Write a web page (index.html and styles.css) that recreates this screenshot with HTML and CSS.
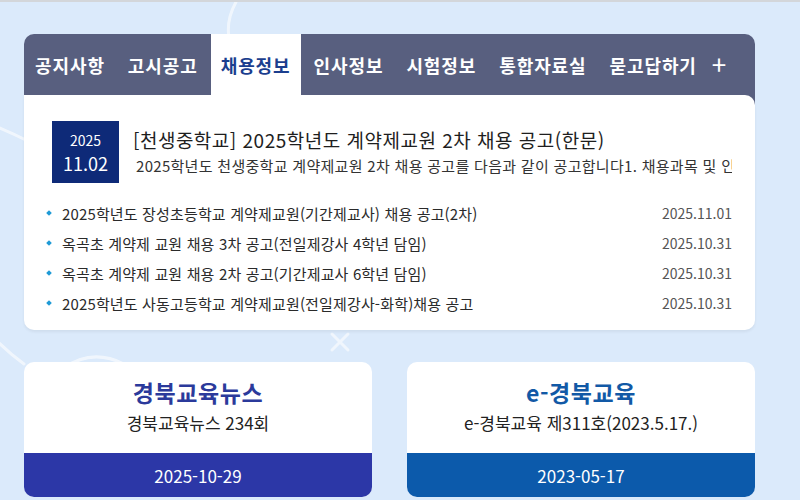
FILE: index.html
```html
<!DOCTYPE html>
<html lang="ko">
<head>
  <meta charset="UTF-8" />
  <title>채용정보</title>
  <link rel="stylesheet" href="styles.css">
</head>
<body>
  <svg class="deco" width="800" height="500" viewBox="0 0 800 500" aria-hidden="true">
    <path d="M236 0 Q226 18 229 36" />
    <path d="M-10 122 Q10 130 30 140" />
    <path d="M-4 338 Q10 352 24 362" />
    <path d="M64 366 Q92 346 124 362" />
    <path d="M332 332 L348 348 M348 332 L332 348" />
  </svg>

  <main class="wrap">
    <section class="board">
      <nav class="tabs">
        <a class="tab">공지사항</a>
        <a class="tab">고시공고</a>
        <a class="tab active">채용정보</a>
        <a class="tab">인사정보</a>
        <a class="tab">시험정보</a>
        <a class="tab">통합자료실</a>
        <a class="tab">묻고답하기</a>
        <a class="more">+</a>
      </nav>

      <div class="panel">
        <div class="feature">
          <div class="datebox">
            <span class="year">2025</span>
            <span class="day">11.02</span>
          </div>
          <div class="feature-text">
            <div class="headline">[천생중학교] 2025학년도 계약제교원 2차 채용 공고(한문)</div>
            <div class="summary">2025학년도 천생중학교 계약제교원 2차 채용 공고를 다음과 같이 공고합니다1. 채용과목 및 인원 : 한문 1명</div>
          </div>
        </div>

        <ul class="posts">
          <li><span class="title">2025학년도 장성초등학교 계약제교원(기간제교사) 채용 공고(2차)</span><span class="date">2025.11.01</span></li>
          <li><span class="title">옥곡초 계약제 교원 채용 3차 공고(전일제강사 4학년 담임)</span><span class="date">2025.10.31</span></li>
          <li><span class="title">옥곡초 계약제 교원 채용 2차 공고(기간제교사 6학년 담임)</span><span class="date">2025.10.31</span></li>
          <li><span class="title">2025학년도 사동고등학교 계약제교원(전일제강사-화학)채용 공고</span><span class="date">2025.10.31</span></li>
        </ul>
      </div>
    </section>

    <section class="cards">
      <div class="card news">
        <div class="card-body">
          <strong class="card-title">경북교육뉴스</strong>
          <span class="card-sub">경북교육뉴스 234회</span>
        </div>
        <div class="card-date">2025-10-29</div>
      </div>
      <div class="card mag">
        <div class="card-body">
          <strong class="card-title">e-경북교육</strong>
          <span class="card-sub">e-경북교육 제311호(2023.5.17.)</span>
        </div>
        <div class="card-date">2023-05-17</div>
      </div>
    </section>
  </main>
</body>
</html>
```

FILE: styles.css
```css
body {
  margin: 0;
  height: 500px;
  overflow: hidden;
  background: #dbeafb;
  border-top: 2px solid #d3d6da;
  box-sizing: border-box;
  font-family: "Noto Sans CJK KR", "Noto Sans", sans-serif;
  color: #222;
  position: relative;
}
.deco {
  position: absolute;
  top: 0;
  left: 0;
  fill: none;
  stroke: #ffffff;
  stroke-width: 3;
  stroke-linecap: round;
  opacity: 0.6;
}
.wrap {
  position: relative;
  width: 731px;
  padding: 32px 0 0 24px;
}

/* tab board */
.board {
  background: linear-gradient(#585f7f, #585f7f) top / 100% 80px no-repeat;
  border-radius: 10px 10px 0 0;
}
.tabs {
  display: flex;
  align-items: stretch;
  height: 61px;
  padding-left: 1px;
}
.tab, .more {
  display: flex;
  align-items: center;
  padding: 0 10px;
  margin-right: 3px;
  color: #fff;
  font-size: 18px;
  font-weight: 700;
  letter-spacing: 0.9px;
}
.tab.active {
  background: #fff;
  color: #1b3e8e;
}
.more {
  font-weight: 400;
  font-size: 26px;
  padding: 0 0 3px 2px;
}
.panel {
  background: #fff;
  border-radius: 0 10px 10px 10px;
  padding: 26px 23px 12px 28px;
  box-shadow: 0 2px 3px rgba(0, 0, 0, 0.06);
}

/* latest notice */
.feature {
  display: flex;
  align-items: center;
  gap: 14px;
}
.datebox {
  flex: none;
  width: 67px;
  height: 62px;
  background: #0e2a78;
  color: #fff;
  display: flex;
  flex-direction: column;
  align-items: center;
  justify-content: center;
  padding-top: 1px;
  box-sizing: border-box;
}
.year {
  font-size: 14px;
  line-height: 21px;
}
.day {
  font-size: 18px;
  line-height: 25px;
}
.feature-text {
  min-width: 0;
  flex: 1;
}
.headline {
  font-size: 19px;
  line-height: 27px;
  letter-spacing: 0.5px;
  color: #1e1e1e;
}
.summary {
  font-size: 15px;
  line-height: 25px;
  padding-left: 3px;
  letter-spacing: 0.3px;
  color: #333;
  white-space: nowrap;
  overflow: hidden;
}

/* list */
.posts {
  list-style: none;
  margin: 15px 0 0;
  padding: 0;
}
.posts li {
  display: flex;
  justify-content: space-between;
  align-items: center;
  height: 30px;
  font-size: 15px;
}
.posts .title {
  position: relative;
  padding-left: 10px;
  letter-spacing: 0.15px;
  color: #2a2a2a;
}
.posts .title::before {
  content: "";
  position: absolute;
  left: -5px;
  top: 50%;
  width: 4px;
  height: 4px;
  margin-top: -2px;
  background: #1e9ad6;
  transform: rotate(45deg);
}
.posts .date {
  font-size: 14px;
  color: #555;
}

/* bottom cards */
.cards {
  display: grid;
  grid-template-columns: 1fr 1fr;
  gap: 35px;
  margin-top: 32px;
}
.card {
  background: #fff;
  border-radius: 10px;
  overflow: hidden;
}
.card-body {
  height: 91px;
  display: flex;
  flex-direction: column;
  align-items: center;
  padding-top: 14px;
  box-sizing: border-box;
}
.card-title {
  font-size: 23px;
  line-height: 32px;
  font-weight: 700;
  letter-spacing: 0.6px;
}
.card-sub {
  font-size: 17px;
  line-height: 30px;
  color: #222;
}
.news .card-title { color: #2b3a9b; }
.mag .card-title { color: #1259a6; }
.card-date {
  height: 44px;
  display: flex;
  align-items: center;
  justify-content: center;
  color: #fff;
  font-size: 17px;
}
.news .card-date { background: #2c37a7; }
.mag .card-date { background: #0c5aab; }
```
